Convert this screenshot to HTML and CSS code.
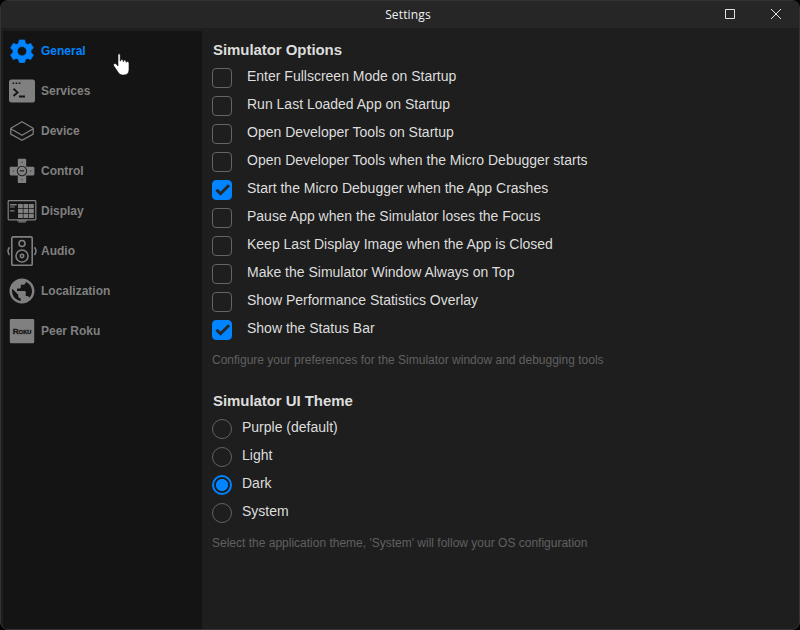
FILE: index.html
```html
<!DOCTYPE html>
<html lang="en">
<head>
<meta charset="utf-8">
<title>Settings</title>
<link rel="stylesheet" href="styles.css">
</head>
<body>
<div class="window">
  <header class="titlebar">
    <span class="title">Settings</span>
    <svg class="window-buttons" width="58" height="12" viewBox="0 0 58 12" fill="none" stroke="#e0e0e0"><path d="M1.5 1.5h9v9h-9z"/><path d="M47 1l10 10M57 1L47 11"/></svg>
  </header>
  <div class="content">
    <nav class="sidebar">
      <div class="item active">
        <svg class="icon" viewBox="-.8 -.8 31.600 31.600"><path fill="currentColor" stroke="currentColor" stroke-width=".8" stroke-linejoin="round" fill-rule="evenodd" d="M12.200 3.400h5.600l.8 3.600 2.200 1.200 3.400-1.100 2.800 4.800-2.600 2.400v2.400l2.600 2.400-2.800 4.800-3.400-1.100-2.200 1.200-.8 3.100h-5.600l-.8-3.100-2.200-1.200-3.400 1.100L3 19.100l2.600-2.400v-2.400L3 11.900l2.800-4.800 3.400 1.100L11.400 7zM15 10.200a5 5 0 1 0 0 10a5 5 0 0 0 0-10z"/></svg>
        <span>General</span>
      </div>
      <div class="item">
        <svg class="icon" viewBox="0 0 30 30"><rect x="2" y="3.500" width="26" height="23" rx="2.500" fill="currentColor"/><path d="M5.500 7.300h1.700M8.600 7.300h1.700M11.700 7.300h1.700" stroke="#141414" stroke-width="1.500"/><path d="M6.500 12.800l4 3.600-4 3.600M12 20.500h6" fill="none" stroke="#141414" stroke-width="1.900"/></svg>
        <span>Services</span>
      </div>
      <div class="item">
        <svg class="icon" viewBox="0 0 30 30" fill="none" stroke="currentColor" stroke-width="1.250" stroke-linejoin="round"><path d="M15 5.700l11.200 6.500v5.900L15 24.300 3.800 18.100v-5.900zM3.800 12.800L15 19.300l11.200-6.500"/></svg>
        <span>Device</span>
      </div>
      <div class="item">
        <svg class="icon" viewBox="0 0 30 30"><path fill="currentColor" d="M12 2.700h6a1.200 1.200 0 0 1 1.200 1.200v6.900h6.900a1.300 1.300 0 0 1 1.300 1.300v6a1.300 1.300 0 0 1-1.300 1.300h-6.900v6.500a1.200 1.200 0 0 1-1.200 1.200h-6a1.200 1.200 0 0 1-1.200-1.200v-6.500H4a1.300 1.300 0 0 1-1.300-1.300v-6A1.300 1.300 0 0 1 4 10.800h6.800V3.900A1.200 1.200 0 0 1 12 2.700z"/><circle cx="15" cy="15" r="4.700" fill="none" stroke="#242424" stroke-width="1.100"/><path d="M14 6.500l1-1 1 1zM14 23.500l1 1 1-1zM6.500 14l-1 1 1 1zM23.500 14l1 1-1 1z" fill="#242424"/><path d="M12.800 14.800h4.400" stroke="#333" stroke-width="1.600"/></svg>
        <span>Control</span>
      </div>
      <div class="item">
        <svg class="icon" viewBox="0 0 30 30"><rect x="1.200" y="4.700" width="27.600" height="19.200" rx=".8" fill="none" stroke="currentColor" stroke-width="1.200"/><path fill="currentColor" d="M11 8h4.800v4.200H11zm5.500 0h4.800v4.200h-4.800zm5.500 0h4.800v4.200H22zM11 12.900h4.800v4.200H11zm5.500 0h4.800v4.200h-4.800zm5.500 0h4.800v4.200H22zM11 17.800h4.800V22H11zm5.500 0h4.800V22h-4.800zm5.500 0h4.800V22H22zM3 8h6.700v1.500H3zm0 2.400h4.800v1H3zm0 3.800h4.500v1.200H3zM10 24.300h10v1H10zm1.300 1.200h7.400v.9h-7.400z"/></svg>
        <span>Display</span>
      </div>
      <div class="item">
        <svg class="icon" viewBox="0 0 30 30" fill="none" stroke="currentColor" stroke-width="1.600"><rect x="4.800" y=".9" width="20.400" height="28.400" rx="1.400"/><circle cx="15" cy="7.500" r="3"/><circle cx="15" cy="20" r="6"/><circle cx="15" cy="20" r="1.700"/><path d="M2.500 11.200q-3 3.900 0 7.800M27.500 11.200q3 3.900 0 7.800" stroke-width="1.500"/></svg>
        <span>Audio</span>
      </div>
      <div class="item">
        <svg class="icon" viewBox="0 0 24 24"><path fill="currentColor" d="M12 2C6.480 2 2 6.480 2 12s4.480 10 10 10 10-4.480 10-10S17.520 2 12 2zm-1 17.930c-3.950-.49-7-3.850-7-7.930 0-.62.08-1.210.21-1.790L9 15v1c0 1.100.9 2 2 2v1.930zm6.900-2.540c-.26-.81-1-1.390-1.900-1.390h-1v-3c0-.55-.45-1-1-1H8v-2h2c.55 0 1-.45 1-1V7h2c1.100 0 2-.9 2-2v-.41c2.930 1.190 5 4.060 5 7.410 0 2.080-.8 3.970-2.100 5.390z"/></svg>
        <span>Localization</span>
      </div>
      <div class="item">
        <svg class="icon" viewBox="0 0 30 30"><rect x="2.800" y="3" width="24.400" height="24.200" rx="1.200" fill="currentColor"/><text class="brand" x="15" y="17.500" text-anchor="middle" textLength="18.500" lengthAdjust="spacingAndGlyphs">Roku</text></svg>
        <span>Peer Roku</span>
      </div>
    </nav>
    <main class="panel">
      <section class="group">
        <h2>Simulator Options</h2>
        <label class="row"><input type="checkbox"><span>Enter Fullscreen Mode on Startup</span></label>
        <label class="row"><input type="checkbox"><span>Run Last Loaded App on Startup</span></label>
        <label class="row"><input type="checkbox"><span>Open Developer Tools on Startup</span></label>
        <label class="row"><input type="checkbox"><span>Open Developer Tools when the Micro Debugger starts</span></label>
        <label class="row"><input type="checkbox" checked><span>Start the Micro Debugger when the App Crashes</span><svg class="tick" viewBox="0 0 20 20"><path d="M4.500 9.700l4 4 8.500-8.500"/></svg></label>
        <label class="row"><input type="checkbox"><span>Pause App when the Simulator loses the Focus</span></label>
        <label class="row"><input type="checkbox"><span>Keep Last Display Image when the App is Closed</span></label>
        <label class="row"><input type="checkbox"><span>Make the Simulator Window Always on Top</span></label>
        <label class="row"><input type="checkbox"><span>Show Performance Statistics Overlay</span></label>
        <label class="row"><input type="checkbox" checked><span>Show the Status Bar</span><svg class="tick" viewBox="0 0 20 20"><path d="M4.500 9.700l4 4 8.500-8.500"/></svg></label>
        <p class="help">Configure your preferences for the Simulator window and debugging tools</p>
      </section>
      <section class="group">
        <h2>Simulator UI Theme</h2>
        <label class="row radio"><input type="radio" name="theme"><span>Purple (default)</span></label>
        <label class="row radio"><input type="radio" name="theme"><span>Light</span></label>
        <label class="row radio"><input type="radio" name="theme" checked><span>Dark</span></label>
        <label class="row radio"><input type="radio" name="theme"><span>System</span></label>
        <p class="help">Select the application theme, 'System' will follow your OS configuration</p>
      </section>
    </main>
  </div>
  <svg class="pointer" width="20" height="26" viewBox="0 0 20 26"><path fill="#fff" stroke="#111" stroke-width=".6" d="M5 3q0-1.200 1.100-1.200T7.200 3v6h.6V7.500q2.100-.5 2.200 1v1h.6V8.200q2.200-.4 2.300 1v1h.6V9.300q2.500-.2 2.500 1.700v6.500q0 5.500-5.500 5.500H9.300q-2.500 0-4-2.500L.7 13.800q-.7-1.500.7-2.100 1-.4 2 .6L5 14z"/></svg>
</div>
</body>
</html>
```
FILE: styles.css
```css
* { box-sizing: border-box; }
html { background: #000; }
body { margin: 0; font-family: "Liberation Sans", Arial, sans-serif; }
.window {
  position: relative;
  width: 800px;
  height: 630px;
  border: 1px solid #333;
  border-radius: 8px;
  background: #1e1e1e;
  overflow: hidden;
  display: flex;
  flex-direction: column;
}
.titlebar {
  height: 27px;
  background: #262626;
  display: grid;
  grid-template-columns: 1fr auto 1fr;
  align-items: center;
}
.title {
  grid-column: 2;
  padding-left: 16px;
  font: 12px/27px "Open Sans", sans-serif;
  letter-spacing: .15px;
  color: #f0f0f0;
}
.window-buttons { justify-self: end; margin: 0 17px 2px 0; }
.content { flex: 1; display: flex; padding: 3px 0 0 2px; }
.sidebar { width: 199px; background: #141414; }
.item {
  height: 40px;
  padding-left: 4px;
  display: flex;
  align-items: center;
  gap: 4px;
  color: #808080;
  font-size: 12px;
  font-weight: bold;
}
.active { color: #0084ff; }
.icon { width: 30px; height: 30px; flex: none; }
.brand { font: small-caps bold 7.5px "Liberation Sans", sans-serif; fill: #141414; stroke: #141414; stroke-width: .3px; }
.panel { padding: 8px 0 0 10px; }
.group { height: 351px; }
h2 {
  margin: 0 0 7px 1px;
  font-size: 15px;
  line-height: 22px;
  letter-spacing: -.06px;
  color: #ddd;
}
.row {
  position: relative;
  height: 28px;
  display: flex;
  gap: 15px;
  font-size: 14px;
  line-height: 20px;
  color: #ddd;
}
.row.radio { gap: 10px; }
.row span { margin-top: -2px; }
input {
  appearance: none;
  flex: none;
  width: 20px;
  height: 20px;
  margin: 0;
  border: 1px solid #636363;
  border-radius: 4px;
}
input[type="checkbox"]:checked { background: #0084ff; border-color: #0084ff; }
input[type="radio"] { border-radius: 50%; }
input[type="radio"]:checked {
  border: 2px solid #0084ff;
  background: radial-gradient(circle, #0084ff 5.700px, transparent 6.300px);
}
.tick { position: absolute; left: 0; top: 0; width: 20px; height: 20px; fill: none; stroke: #262626; stroke-width: 3; }
.help {
  margin: 4px 0 0;
  font-size: 12px;
  line-height: 16px;
  color: #606060;
}
.pointer { position: absolute; left: 112px; top: 51px; }
```
